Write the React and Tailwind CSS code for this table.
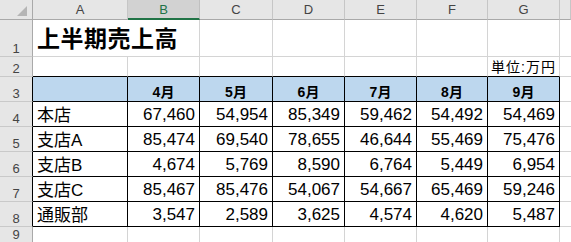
import React from 'react';

const FONT = "font-['Liberation_Sans','Noto_Sans_CJK_JP',sans-serif]";

const cols = ['A', 'B', 'C', 'D', 'E', 'F', 'G', ''];
const months = ['4月', '5月', '6月', '7月', '8月', '9月'];
const rows = [
  ['本店', '67,460', '54,954', '85,349', '59,462', '54,492', '54,469'],
  ['支店A', '85,474', '69,540', '78,655', '46,644', '55,469', '75,476'],
  ['支店B', '4,674', '5,769', '8,590', '6,764', '5,449', '6,954'],
  ['支店C', '85,467', '85,476', '54,067', '54,667', '65,469', '59,246'],
  ['通販部', '3,547', '2,589', '3,625', '4,574', '4,620', '5,487'],
];

const RowHead = ({ n, dark }) => (
  <div
    className={`flex items-end justify-center bg-[#e6e6e6] border-b border-b-[#c9c9c9] border-r ${
      dark ? 'border-r-black' : 'border-r-[#a9a9a9]'
    } pb-[1px] text-[13px] leading-none text-[#444]`}
  >
    {n}
  </div>
);

const Grid = ({ children, right = true, bottomBlack = false }) => (
  <div
    className={`border-b ${bottomBlack ? 'border-b-black' : 'border-b-[#d4d4d4]'} ${
      right ? 'border-r border-r-[#d4d4d4]' : ''
    }`}
  >
    {children}
  </div>
);

export default function App() {
  return (
    <div className={`w-[571px] h-[242px] overflow-hidden bg-white ${FONT}`}>
      <div className="grid grid-cols-[33px_95px_72px_73px_72px_72px_71px_72px_1fr] grid-rows-[20px_37px_20px_25px_25px_25px_25px_25px_25px_16px]">
        {/* column headers */}
        <div className="relative bg-[#e6e6e6] border-r border-b border-[#a9a9a9]">
          <div className="absolute right-[5px] bottom-[3px] w-0 h-0 border-l-[10px] border-l-transparent border-b-[10px] border-b-[#b5b5b5]" />
        </div>
        {cols.map((c, i) =>
          c === 'B' ? (
            <div
              key={i}
              className="flex items-center justify-center bg-[#d2d2d2] border-r border-r-[#c0c0c0] border-b-2 border-b-[#217346] text-[13px] text-[#217346] leading-none"
            >
              {c}
            </div>
          ) : (
            <div
              key={i}
              className="flex items-center justify-center bg-[#e6e6e6] border-r border-r-[#c6c6c6] border-b border-b-[#a9a9a9] text-[13px] text-[#444] leading-none"
            >
              {c}
            </div>
          )
        )}

        {/* row 1 */}
        <RowHead n={1} />
        <div className="col-span-2 flex items-end border-r border-b border-[#d4d4d4] pl-[4px] pb-[5px]">
          <span className="text-[23px] font-bold leading-none tracking-[0.5px] text-black whitespace-nowrap">
            上半期売上高
          </span>
        </div>
        {[0, 1, 2, 3, 4, 5].map((i) => (
          <Grid key={i} right={i < 5} />
        ))}

        {/* row 2 */}
        <RowHead n={2} />
        {[0, 1, 2, 3, 4, 5].map((i) => (
          <Grid key={i} bottomBlack />
        ))}
        <div className="flex items-end justify-end border-r border-r-[#d4d4d4] border-b border-b-black pr-[3px] pb-[2px]">
          <span className="text-[14px] leading-none text-black whitespace-nowrap tracking-[1px]">単位:万円</span>
        </div>
        <Grid right={false} />

        {/* row 3 */}
        <RowHead n={3} dark />
        <div className="bg-[#bdd7ee] border-r border-b border-black" />
        {months.map((m) => (
          <div
            key={m}
            className="flex items-end justify-center bg-[#bdd7ee] border-r border-b border-black pb-[2px] text-[14px] font-bold leading-none text-black"
          >
            {m}
          </div>
        ))}
        <Grid right={false} />

        {/* data rows */}
        {rows.map((r, ri) => (
          <React.Fragment key={r[0]}>
            <RowHead n={ri + 4} dark />
            <div className="flex items-end border-r border-b border-black pl-[4px] pb-[2px] text-[17px] leading-none text-black whitespace-nowrap">
              {r[0]}
            </div>
            {r.slice(1).map((v, vi) => (
              <div
                key={vi}
                className="flex items-end justify-end border-r border-b border-black pr-[4px] pb-[3px] text-[17px] leading-none text-black"
              >
                {v}
              </div>
            ))}
            <Grid right={false} />
          </React.Fragment>
        ))}

        {/* row 9 */}
        <RowHead n={9} />
        {[0, 1, 2, 3, 4, 5, 6].map((i) => (
          <Grid key={i} />
        ))}
        <Grid right={false} />
      </div>
    </div>
  );
}
